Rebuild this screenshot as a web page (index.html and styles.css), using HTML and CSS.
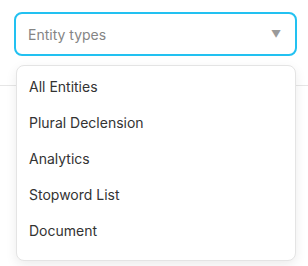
FILE: index.html
```html
<!DOCTYPE html>
<html>
<head>
<meta charset="utf-8">
<link rel="stylesheet" href="styles.css">
</head>
<body>
<div class="page">
  <div class="bar">
    <div class="field">
      <div class="select">
        <span class="placeholder">Entity types</span>
        <span class="arrow">▼</span>
      </div>
      <ul class="menu">
        <li>All Entities</li>
        <li>Plural Declension</li>
        <li>Analytics</li>
        <li>Stopword List</li>
        <li>Document</li>
      </ul>
    </div>
  </div>
  <div class="content"></div>
</div>
</body>
</html>
```
FILE: styles.css
```css
html, body {
  margin: 0;
  padding: 0;
  background: #ffffff;
  font-family: Inter, "Noto Sans", sans-serif;
}
.page {
  min-height: 266px;
  display: flex;
  flex-direction: column;
}
.bar {
  height: 86px;
  flex: none;
  border-bottom: 1px solid #e6e6e6;
  padding: 12px 11px 0 14px;
  box-sizing: border-box;
  position: relative;
  z-index: 2;
}
.content {
  flex: 1;
}
.field {
  position: relative;
}
.select {
  height: 44px;
  box-sizing: border-box;
  border: 2px solid #22c1f1;
  border-radius: 8px;
  display: flex;
  align-items: center;
  justify-content: space-between;
  padding: 0 14px 0 12px;
  background: #fff;
}
.placeholder {
  font-size: 14px;
  color: #858585;
}
.arrow {
  font-size: 10px;
  color: #9a9a9a;
  line-height: 1;
}
.menu {
  position: absolute;
  z-index: 10;
  top: 53px;
  left: 2px;
  width: 280px;
  height: 196px;
  box-sizing: border-box;
  margin: 0;
  padding: 2px 0 0;
  list-style: none;
  background: #fff;
  border: 1px solid #e4e4e4;
  border-radius: 8px;
  box-shadow: 0 4px 12px rgba(0, 0, 0, 0.08);
}
.menu li {
  height: 36px;
  display: flex;
  align-items: center;
  padding: 0 12px;
  font-size: 14px;
  color: #333333;
}
```
